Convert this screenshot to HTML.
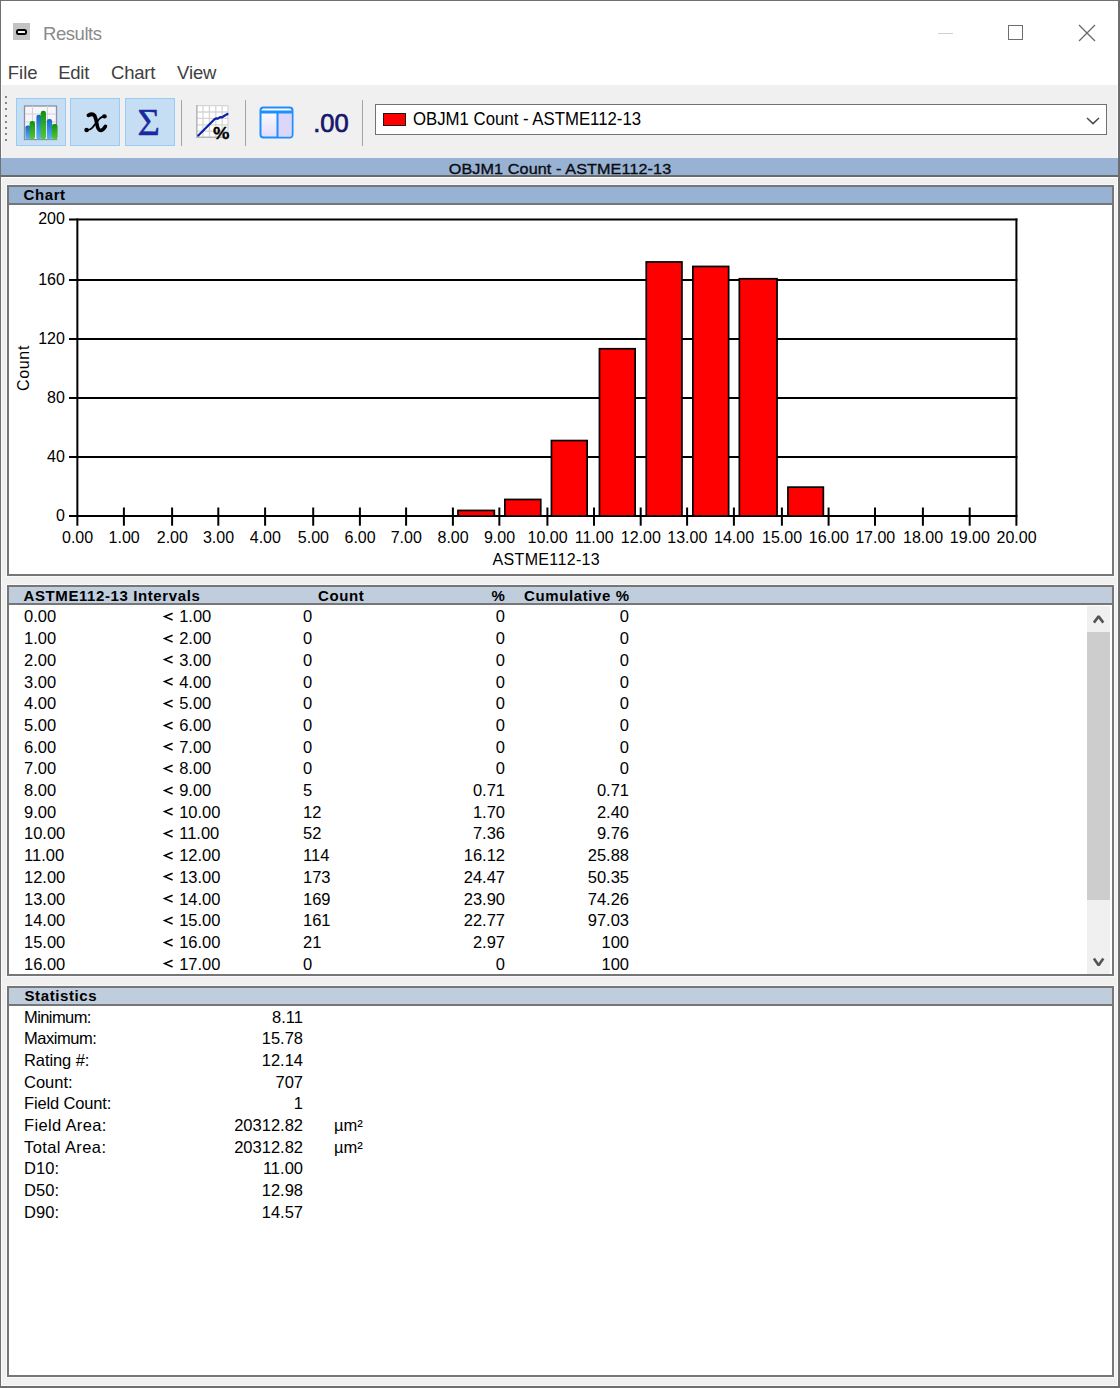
<!DOCTYPE html>
<html><head><meta charset="utf-8"><title>Results</title>
<style>
html,body{margin:0;padding:0;}
body{width:1120px;height:1388px;position:relative;overflow:hidden;background:#f0f0f0;font-family:"Liberation Sans",sans-serif;}
.r{position:absolute;box-sizing:border-box;}
.t{position:absolute;white-space:nowrap;font-family:"Liberation Sans",sans-serif;}
</style></head><body>
<div class="r" style="left:0px;top:0px;width:1120px;height:85px;background:#ffffff;"></div>
<div class="r" style="left:0px;top:85px;width:1120px;height:73px;background:#f0f0f0;"></div>
<div class="r" style="left:0px;top:0px;width:1120px;height:1px;background:#707070;"></div>
<div class="r" style="left:0px;top:0px;width:1px;height:1388px;background:#707070;"></div>
<div class="r" style="left:1118px;top:0px;width:2px;height:1388px;background:#6e6e6e;"></div>
<div class="r" style="left:0px;top:1386px;width:1120px;height:2px;background:#6e6e6e;"></div>
<div class="r" style="left:1px;top:85px;width:1px;height:1301px;background:#fbfbfb;"></div>
<div class="r" style="left:1px;top:1385px;width:1117px;height:1px;background:#fbfbfb;"></div>
<div class="r" style="left:1117px;top:85px;width:1px;height:1301px;background:#fbfbfb;"></div>
<div class="r" style="left:13px;top:23px;width:17px;height:17px;background:#c3c3c3"></div>
<div class="r" style="left:16px;top:29px;width:11px;height:6px;border:2px solid #000;border-radius:2.5px;background:#f6f6f6"></div>
<div class="t" style="left:43.00px;top:24.54px;font-size:18.5px;line-height:18.5px;color:#8a8a8a;letter-spacing:-0.45px;">Results</div>
<div class="r" style="left:938px;top:33px;width:15px;height:1px;background:#cfcfcf;"></div>
<div class="r" style="left:1008px;top:25px;width:15px;height:15.3px;border:1.3px solid #6e6e6e"></div>
<svg class="r" style="left:1076px;top:22px" width="22" height="22" viewBox="0 0 22 22"><path d="M3 3 L19 19 M19 3 L3 19" stroke="#6a6a6a" stroke-width="1.3"/></svg>
<div class="t" style="left:7.80px;top:63.64px;font-size:18.5px;line-height:18.5px;color:#404040;">File</div>
<div class="t" style="left:58.30px;top:63.64px;font-size:18.5px;line-height:18.5px;color:#404040;letter-spacing:-0.3px;">Edit</div>
<div class="t" style="left:111.00px;top:63.64px;font-size:18.5px;line-height:18.5px;color:#404040;letter-spacing:-0.2px;">Chart</div>
<div class="t" style="left:177.00px;top:63.64px;font-size:18.5px;line-height:18.5px;color:#404040;letter-spacing:-0.1px;">View</div>
<div class="r" style="left:4.5px;top:96.0px;width:2px;height:2px;background:#8c8474;"></div>
<div class="r" style="left:4.5px;top:102.2px;width:2px;height:2px;background:#8c8474;"></div>
<div class="r" style="left:4.5px;top:108.4px;width:2px;height:2px;background:#8c8474;"></div>
<div class="r" style="left:4.5px;top:114.6px;width:2px;height:2px;background:#8c8474;"></div>
<div class="r" style="left:4.5px;top:120.8px;width:2px;height:2px;background:#8c8474;"></div>
<div class="r" style="left:4.5px;top:127.0px;width:2px;height:2px;background:#8c8474;"></div>
<div class="r" style="left:4.5px;top:133.2px;width:2px;height:2px;background:#8c8474;"></div>
<div class="r" style="left:4.5px;top:139.4px;width:2px;height:2px;background:#8c8474;"></div>
<div class="r" style="left:16px;top:98px;width:50px;height:48px;background:#c5def4;border:1.3px solid #99cbf7"></div>
<div class="r" style="left:70px;top:98px;width:50px;height:48px;background:#c5def4;border:1.3px solid #99cbf7"></div>
<div class="r" style="left:124.5px;top:98px;width:50px;height:48px;background:#c5def4;border:1.3px solid #99cbf7"></div>
<div class="r" style="left:181px;top:100px;width:1.2px;height:46px;background:#a5a5a5;"></div>
<div class="r" style="left:244.5px;top:100px;width:1.2px;height:46px;background:#a5a5a5;"></div>
<div class="r" style="left:362px;top:100px;width:1.2px;height:46px;background:#a5a5a5;"></div>
<svg class="r" style="left:23px;top:104px" width="36" height="37" viewBox="0 0 36 37">
<defs>
<linearGradient id="gb" x1="0" y1="0" x2="0" y2="1"><stop offset="0" stop-color="#1466c8"/><stop offset="1" stop-color="#5cb4f4"/></linearGradient>
<linearGradient id="gg" x1="0" y1="0" x2="0" y2="1"><stop offset="0" stop-color="#109010"/><stop offset="1" stop-color="#56c83c"/></linearGradient>
</defs>
<rect x="1.5" y="2" width="32" height="33.5" fill="#f6f6fa" stroke="#8e8e9e" stroke-width="1.3"/>
<path d="M2 10 H33 M2 18 H33 M9.5 2 V35 M24.5 2 V35" stroke="#d2d2dc" stroke-width="1"/>
<rect x="2.4" y="21.4" width="5.3" height="14" rx="2.2" fill="url(#gb)"/>
<rect x="13.4" y="10.7" width="4.8" height="24.7" rx="2.2" fill="url(#gb)"/>
<rect x="23.8" y="15" width="5.3" height="20.4" rx="2.2" fill="url(#gb)"/>
<rect x="6.6" y="17" width="5.4" height="18.4" rx="2.4" fill="url(#gg)"/>
<rect x="17.7" y="6.8" width="5.3" height="28.6" rx="2.4" fill="url(#gg)"/>
<rect x="28.8" y="20" width="5.7" height="15.4" rx="2.4" fill="url(#gg)"/>
</svg>
<svg class="r" style="left:80px;top:106px" width="32" height="32" viewBox="0 0 32 32">
<path d="M8.4 9.4 Q12.4 7 14.6 9.6 Q15.9 12.2 16.9 18 Q18 24.6 20.8 24.5 Q23.2 24 25.4 20.4" stroke="#000" stroke-width="3.7" fill="none" stroke-linecap="round"/>
<path d="M24.6 10.2 Q20.8 10.6 17.4 15.4 L12.4 21.6 Q9.6 24.6 6.4 24.2" stroke="#000" stroke-width="1.7" fill="none"/>
<ellipse cx="24.4" cy="10.4" rx="2.4" ry="2.1"/>
<ellipse cx="6.6" cy="24.0" rx="2.3" ry="2.2"/>
</svg>
<div class="t" style="left:137.5px;top:101.8px;width:30px;height:40px;font-family:'Liberation Serif',serif;font-size:38.5px;line-height:40px;color:#1a2a9e;-webkit-text-stroke:0.45px #1a2a9e">&Sigma;</div>
<svg class="r" style="left:196px;top:105px" width="36" height="36" viewBox="0 0 36 36">
<rect x="0" y="0" width="32.5" height="32.5" fill="#ffffff"/>
<path d="M7 0 V32.5 M13.4 0 V32.5 M19.8 0 V32.5 M26.2 0 V32.5 M32 0 V32.5 M0 0.6 H32.5 M0 7 H32.5 M0 13.4 H32.5 M0 19.8 H32.5 M0 26.2 H32.5" stroke="#d6d6d6" stroke-width="1.3"/>
<path d="M0.8 0 V32.2 H32.5" stroke="#b8b8b8" stroke-width="1.6" fill="none"/>
<path d="M2.3 30.6 L18.5 14.2 L20.5 13.3 L22 13.6 L24 12.2 L26 12.4 L28 11 L31.5 9" stroke="#0a24a4" stroke-width="2.2" fill="none" stroke-linecap="round" stroke-linejoin="round"/>
</svg>
<div class="t" style="left:213px;top:124.6px;font-size:16.5px;line-height:17px;font-weight:bold;color:#000;transform:scaleX(1.12);transform-origin:0 0;-webkit-text-stroke:0.3px #000">%</div>
<svg class="r" style="left:259px;top:106px" width="36" height="34" viewBox="0 0 36 34">
<defs><linearGradient id="g1" x1="0" y1="0" x2="0" y2="1"><stop offset="0" stop-color="#ffffff"/><stop offset="1" stop-color="#e2dcfa"/></linearGradient></defs>
<rect x="1.5" y="1.5" width="32" height="30" rx="3" fill="url(#g1)" stroke="#1e8fff" stroke-width="2"/>
<rect x="19" y="7" width="13.5" height="23.5" fill="#dcd6fa"/>
<path d="M1.5 6 H33.5" stroke="#1e8fff" stroke-width="3"/>
<path d="M18.5 6 V31.5" stroke="#1e8fff" stroke-width="2"/>
</svg>
<div class="t" style="left:313.20px;top:110.51px;font-size:25.5px;line-height:25.5px;color:#16166a;-webkit-text-stroke:0.7px #16166a;">.00</div>
<div class="r" style="left:375px;top:104px;width:732px;height:31px;background:#fff;border:1.3px solid #727272"></div>
<div class="r" style="left:382.5px;top:113.3px;width:23px;height:12.5px;background:#ff0000;border:1.3px solid #1a1a1a"></div>
<div class="t" style="left:413.30px;top:109.69px;font-size:18.8px;line-height:18.8px;color:#000;transform:scaleX(0.893);transform-origin:0 0;">OBJM1 Count - ASTME112-13</div>
<svg class="r" style="left:1084px;top:114px" width="18" height="12" viewBox="0 0 18 12"><path d="M3 4 L9 9.6 L15 4" stroke="#4a4a4a" stroke-width="1.5" fill="none"/></svg>
<div class="r" style="left:1px;top:158px;width:1117px;height:17px;background:#98b2d3;"></div>
<div class="r" style="left:1px;top:175px;width:1117px;height:2px;background:#6b6b6b;"></div>
<div class="r" style="left:1px;top:177px;width:1117px;height:1px;background:#ffffff;"></div>
<div class="t" style="left:259.70px;width:600px;text-align:center;top:161.03px;font-size:15.2px;line-height:15.2px;color:#0c0c10;letter-spacing:0.1px;transform:scaleX(1.065);-webkit-text-stroke:0.35px #0c0c10;">OBJM1 Count - ASTME112-13</div>
<div class="r" style="left:7px;top:185px;width:1107px;height:391px;background:#fff;border:2px solid #767676;box-shadow:0 0 0 1px #f9f9f9"></div>
<div class="r" style="left:9px;top:187px;width:1103px;height:16px;background:#98b2d3;"></div>
<div class="r" style="left:9px;top:203px;width:1103px;height:2px;background:#767676;"></div>
<div class="r" style="left:7px;top:585px;width:1107px;height:391px;background:#fff;border:2px solid #767676;box-shadow:0 0 0 1px #f9f9f9"></div>
<div class="r" style="left:9px;top:587px;width:1103px;height:16px;background:#bfcddc;"></div>
<div class="r" style="left:9px;top:603px;width:1103px;height:2px;background:#767676;"></div>
<div class="r" style="left:7px;top:986px;width:1107px;height:391px;background:#fff;border:2px solid #767676;box-shadow:0 0 0 1px #f9f9f9"></div>
<div class="r" style="left:9px;top:988px;width:1103px;height:16px;background:#bfcddc;"></div>
<div class="r" style="left:9px;top:1004px;width:1103px;height:2px;background:#767676;"></div>
<div class="t" style="left:23.50px;top:187.30px;font-size:15px;line-height:15px;font-weight:bold;color:#000;letter-spacing:0.6px;">Chart</div>
<div class="t" style="left:23.50px;top:588.00px;font-size:15px;line-height:15px;font-weight:bold;color:#000;letter-spacing:0.6px;">ASTME112-13 Intervals</div>
<div class="t" style="left:318.00px;top:588.00px;font-size:15px;line-height:15px;font-weight:bold;color:#000;letter-spacing:0.6px;">Count</div>
<div class="t" style="right:614.70px;text-align:right;top:588.00px;font-size:15px;line-height:15px;font-weight:bold;color:#000;letter-spacing:0.6px;">%</div>
<div class="t" style="right:490.40px;text-align:right;top:588.00px;font-size:15px;line-height:15px;font-weight:bold;color:#000;letter-spacing:0.6px;">Cumulative %</div>
<div class="t" style="left:24.50px;top:987.90px;font-size:15px;line-height:15px;font-weight:bold;color:#000;letter-spacing:0.6px;">Statistics</div>
<svg class="r" style="left:0;top:0" width="1120" height="600" viewBox="0 0 1120 600">
<path d="M69 516.07 H1017.40" stroke="#000" stroke-width="2"/>
<path d="M69 457.07 H1017.40" stroke="#000" stroke-width="2"/>
<path d="M69 398.04 H1017.40" stroke="#000" stroke-width="2"/>
<path d="M69 339.00 H1017.40" stroke="#000" stroke-width="2"/>
<path d="M69 280.07 H1017.40" stroke="#000" stroke-width="2"/>
<path d="M69 219.60 H1017.40" stroke="#000" stroke-width="2"/>
<path d="M77.36 218.60 V525.7" stroke="#000" stroke-width="2"/>
<path d="M1016.40 218.60 V525.7" stroke="#000" stroke-width="2"/>
<path d="M123.90 507.5 V525.7" stroke="#000" stroke-width="2"/>
<path d="M172.10 507.5 V525.7" stroke="#000" stroke-width="2"/>
<path d="M218.30 507.5 V525.7" stroke="#000" stroke-width="2"/>
<path d="M265.10 507.5 V525.7" stroke="#000" stroke-width="2"/>
<path d="M313.20 507.5 V525.7" stroke="#000" stroke-width="2"/>
<path d="M359.90 507.5 V525.7" stroke="#000" stroke-width="2"/>
<path d="M406.10 507.5 V525.7" stroke="#000" stroke-width="2"/>
<path d="M452.90 507.5 V525.7" stroke="#000" stroke-width="2"/>
<path d="M499.35 507.5 V525.7" stroke="#000" stroke-width="2"/>
<path d="M547.40 507.5 V525.7" stroke="#000" stroke-width="2"/>
<path d="M594.00 507.5 V525.7" stroke="#000" stroke-width="2"/>
<path d="M640.70 507.5 V525.7" stroke="#000" stroke-width="2"/>
<path d="M687.10 507.5 V525.7" stroke="#000" stroke-width="2"/>
<path d="M733.90 507.5 V525.7" stroke="#000" stroke-width="2"/>
<path d="M781.90 507.5 V525.7" stroke="#000" stroke-width="2"/>
<path d="M828.60 507.5 V525.7" stroke="#000" stroke-width="2"/>
<path d="M875.00 507.5 V525.7" stroke="#000" stroke-width="2"/>
<path d="M922.90 507.5 V525.7" stroke="#000" stroke-width="2"/>
<path d="M969.70 507.5 V525.7" stroke="#000" stroke-width="2"/>
<rect x="457.95" y="510.45" width="36.40" height="5.62" fill="#ff0000" stroke="#000" stroke-width="1.7"/>
<rect x="504.85" y="499.45" width="35.90" height="16.62" fill="#ff0000" stroke="#000" stroke-width="1.7"/>
<rect x="551.45" y="440.55" width="35.70" height="75.52" fill="#ff0000" stroke="#000" stroke-width="1.7"/>
<rect x="599.45" y="348.75" width="35.70" height="167.32" fill="#ff0000" stroke="#000" stroke-width="1.7"/>
<rect x="646.25" y="261.95" width="35.70" height="254.12" fill="#ff0000" stroke="#000" stroke-width="1.7"/>
<rect x="692.85" y="266.45" width="35.80" height="249.62" fill="#ff0000" stroke="#000" stroke-width="1.7"/>
<rect x="739.35" y="278.75" width="37.70" height="237.32" fill="#ff0000" stroke="#000" stroke-width="1.7"/>
<rect x="787.95" y="487.15" width="35.40" height="28.92" fill="#ff0000" stroke="#000" stroke-width="1.7"/>
</svg>
<div class="t" style="right:1055.10px;text-align:right;top:507.93px;font-size:16px;line-height:16px;color:#000;">0</div>
<div class="t" style="right:1055.10px;text-align:right;top:448.93px;font-size:16px;line-height:16px;color:#000;">40</div>
<div class="t" style="right:1055.10px;text-align:right;top:389.90px;font-size:16px;line-height:16px;color:#000;">80</div>
<div class="t" style="right:1055.10px;text-align:right;top:330.86px;font-size:16px;line-height:16px;color:#000;">120</div>
<div class="t" style="right:1055.10px;text-align:right;top:271.93px;font-size:16px;line-height:16px;color:#000;">160</div>
<div class="t" style="right:1055.10px;text-align:right;top:211.46px;font-size:16px;line-height:16px;color:#000;">200</div>
<div class="t" style="left:-222.44px;width:600px;text-align:center;top:530.26px;font-size:16px;line-height:16px;color:#000;">0.00</div>
<div class="t" style="left:-175.90px;width:600px;text-align:center;top:530.26px;font-size:16px;line-height:16px;color:#000;">1.00</div>
<div class="t" style="left:-127.70px;width:600px;text-align:center;top:530.26px;font-size:16px;line-height:16px;color:#000;">2.00</div>
<div class="t" style="left:-81.50px;width:600px;text-align:center;top:530.26px;font-size:16px;line-height:16px;color:#000;">3.00</div>
<div class="t" style="left:-34.70px;width:600px;text-align:center;top:530.26px;font-size:16px;line-height:16px;color:#000;">4.00</div>
<div class="t" style="left:13.40px;width:600px;text-align:center;top:530.26px;font-size:16px;line-height:16px;color:#000;">5.00</div>
<div class="t" style="left:60.10px;width:600px;text-align:center;top:530.26px;font-size:16px;line-height:16px;color:#000;">6.00</div>
<div class="t" style="left:106.30px;width:600px;text-align:center;top:530.26px;font-size:16px;line-height:16px;color:#000;">7.00</div>
<div class="t" style="left:153.10px;width:600px;text-align:center;top:530.26px;font-size:16px;line-height:16px;color:#000;">8.00</div>
<div class="t" style="left:199.55px;width:600px;text-align:center;top:530.26px;font-size:16px;line-height:16px;color:#000;">9.00</div>
<div class="t" style="left:247.60px;width:600px;text-align:center;top:530.26px;font-size:16px;line-height:16px;color:#000;">10.00</div>
<div class="t" style="left:294.20px;width:600px;text-align:center;top:530.26px;font-size:16px;line-height:16px;color:#000;">11.00</div>
<div class="t" style="left:340.90px;width:600px;text-align:center;top:530.26px;font-size:16px;line-height:16px;color:#000;">12.00</div>
<div class="t" style="left:387.30px;width:600px;text-align:center;top:530.26px;font-size:16px;line-height:16px;color:#000;">13.00</div>
<div class="t" style="left:434.10px;width:600px;text-align:center;top:530.26px;font-size:16px;line-height:16px;color:#000;">14.00</div>
<div class="t" style="left:482.10px;width:600px;text-align:center;top:530.26px;font-size:16px;line-height:16px;color:#000;">15.00</div>
<div class="t" style="left:528.80px;width:600px;text-align:center;top:530.26px;font-size:16px;line-height:16px;color:#000;">16.00</div>
<div class="t" style="left:575.20px;width:600px;text-align:center;top:530.26px;font-size:16px;line-height:16px;color:#000;">17.00</div>
<div class="t" style="left:623.10px;width:600px;text-align:center;top:530.26px;font-size:16px;line-height:16px;color:#000;">18.00</div>
<div class="t" style="left:669.90px;width:600px;text-align:center;top:530.26px;font-size:16px;line-height:16px;color:#000;">19.00</div>
<div class="t" style="left:716.60px;width:600px;text-align:center;top:530.26px;font-size:16px;line-height:16px;color:#000;">20.00</div>
<div class="t" style="left:246.30px;width:600px;text-align:center;top:551.56px;font-size:16px;line-height:16px;color:#000;letter-spacing:0.35px;">ASTME112-13</div>
<div class="t" style="left:-7.8px;top:358.8px;width:64px;height:18px;font-size:16px;line-height:18px;text-align:center;letter-spacing:0.7px;transform:rotate(-90deg)">Count</div>
<div class="t" style="left:24.00px;top:608.43px;font-size:16.5px;line-height:16.5px;color:#000;">0.00</div>
<svg class="r" style="left:160px;top:610.00px" width="16" height="14" viewBox="0 0 16 14"><path d="M12.6 3.2 L4.6 6.6 L12.6 10" stroke="#000" stroke-width="1.5" fill="none" stroke-linejoin="miter"/></svg>
<div class="t" style="left:179.20px;top:608.43px;font-size:16.5px;line-height:16.5px;color:#000;">1.00</div>
<div class="t" style="left:303.00px;top:608.43px;font-size:16.5px;line-height:16.5px;color:#000;">0</div>
<div class="t" style="right:615.00px;text-align:right;top:608.43px;font-size:16.5px;line-height:16.5px;color:#000;">0</div>
<div class="t" style="right:491.00px;text-align:right;top:608.43px;font-size:16.5px;line-height:16.5px;color:#000;">0</div>
<div class="t" style="left:24.00px;top:630.13px;font-size:16.5px;line-height:16.5px;color:#000;">1.00</div>
<svg class="r" style="left:160px;top:631.70px" width="16" height="14" viewBox="0 0 16 14"><path d="M12.6 3.2 L4.6 6.6 L12.6 10" stroke="#000" stroke-width="1.5" fill="none" stroke-linejoin="miter"/></svg>
<div class="t" style="left:179.20px;top:630.13px;font-size:16.5px;line-height:16.5px;color:#000;">2.00</div>
<div class="t" style="left:303.00px;top:630.13px;font-size:16.5px;line-height:16.5px;color:#000;">0</div>
<div class="t" style="right:615.00px;text-align:right;top:630.13px;font-size:16.5px;line-height:16.5px;color:#000;">0</div>
<div class="t" style="right:491.00px;text-align:right;top:630.13px;font-size:16.5px;line-height:16.5px;color:#000;">0</div>
<div class="t" style="left:24.00px;top:651.83px;font-size:16.5px;line-height:16.5px;color:#000;">2.00</div>
<svg class="r" style="left:160px;top:653.40px" width="16" height="14" viewBox="0 0 16 14"><path d="M12.6 3.2 L4.6 6.6 L12.6 10" stroke="#000" stroke-width="1.5" fill="none" stroke-linejoin="miter"/></svg>
<div class="t" style="left:179.20px;top:651.83px;font-size:16.5px;line-height:16.5px;color:#000;">3.00</div>
<div class="t" style="left:303.00px;top:651.83px;font-size:16.5px;line-height:16.5px;color:#000;">0</div>
<div class="t" style="right:615.00px;text-align:right;top:651.83px;font-size:16.5px;line-height:16.5px;color:#000;">0</div>
<div class="t" style="right:491.00px;text-align:right;top:651.83px;font-size:16.5px;line-height:16.5px;color:#000;">0</div>
<div class="t" style="left:24.00px;top:673.53px;font-size:16.5px;line-height:16.5px;color:#000;">3.00</div>
<svg class="r" style="left:160px;top:675.10px" width="16" height="14" viewBox="0 0 16 14"><path d="M12.6 3.2 L4.6 6.6 L12.6 10" stroke="#000" stroke-width="1.5" fill="none" stroke-linejoin="miter"/></svg>
<div class="t" style="left:179.20px;top:673.53px;font-size:16.5px;line-height:16.5px;color:#000;">4.00</div>
<div class="t" style="left:303.00px;top:673.53px;font-size:16.5px;line-height:16.5px;color:#000;">0</div>
<div class="t" style="right:615.00px;text-align:right;top:673.53px;font-size:16.5px;line-height:16.5px;color:#000;">0</div>
<div class="t" style="right:491.00px;text-align:right;top:673.53px;font-size:16.5px;line-height:16.5px;color:#000;">0</div>
<div class="t" style="left:24.00px;top:695.23px;font-size:16.5px;line-height:16.5px;color:#000;">4.00</div>
<svg class="r" style="left:160px;top:696.80px" width="16" height="14" viewBox="0 0 16 14"><path d="M12.6 3.2 L4.6 6.6 L12.6 10" stroke="#000" stroke-width="1.5" fill="none" stroke-linejoin="miter"/></svg>
<div class="t" style="left:179.20px;top:695.23px;font-size:16.5px;line-height:16.5px;color:#000;">5.00</div>
<div class="t" style="left:303.00px;top:695.23px;font-size:16.5px;line-height:16.5px;color:#000;">0</div>
<div class="t" style="right:615.00px;text-align:right;top:695.23px;font-size:16.5px;line-height:16.5px;color:#000;">0</div>
<div class="t" style="right:491.00px;text-align:right;top:695.23px;font-size:16.5px;line-height:16.5px;color:#000;">0</div>
<div class="t" style="left:24.00px;top:716.93px;font-size:16.5px;line-height:16.5px;color:#000;">5.00</div>
<svg class="r" style="left:160px;top:718.50px" width="16" height="14" viewBox="0 0 16 14"><path d="M12.6 3.2 L4.6 6.6 L12.6 10" stroke="#000" stroke-width="1.5" fill="none" stroke-linejoin="miter"/></svg>
<div class="t" style="left:179.20px;top:716.93px;font-size:16.5px;line-height:16.5px;color:#000;">6.00</div>
<div class="t" style="left:303.00px;top:716.93px;font-size:16.5px;line-height:16.5px;color:#000;">0</div>
<div class="t" style="right:615.00px;text-align:right;top:716.93px;font-size:16.5px;line-height:16.5px;color:#000;">0</div>
<div class="t" style="right:491.00px;text-align:right;top:716.93px;font-size:16.5px;line-height:16.5px;color:#000;">0</div>
<div class="t" style="left:24.00px;top:738.63px;font-size:16.5px;line-height:16.5px;color:#000;">6.00</div>
<svg class="r" style="left:160px;top:740.20px" width="16" height="14" viewBox="0 0 16 14"><path d="M12.6 3.2 L4.6 6.6 L12.6 10" stroke="#000" stroke-width="1.5" fill="none" stroke-linejoin="miter"/></svg>
<div class="t" style="left:179.20px;top:738.63px;font-size:16.5px;line-height:16.5px;color:#000;">7.00</div>
<div class="t" style="left:303.00px;top:738.63px;font-size:16.5px;line-height:16.5px;color:#000;">0</div>
<div class="t" style="right:615.00px;text-align:right;top:738.63px;font-size:16.5px;line-height:16.5px;color:#000;">0</div>
<div class="t" style="right:491.00px;text-align:right;top:738.63px;font-size:16.5px;line-height:16.5px;color:#000;">0</div>
<div class="t" style="left:24.00px;top:760.33px;font-size:16.5px;line-height:16.5px;color:#000;">7.00</div>
<svg class="r" style="left:160px;top:761.90px" width="16" height="14" viewBox="0 0 16 14"><path d="M12.6 3.2 L4.6 6.6 L12.6 10" stroke="#000" stroke-width="1.5" fill="none" stroke-linejoin="miter"/></svg>
<div class="t" style="left:179.20px;top:760.33px;font-size:16.5px;line-height:16.5px;color:#000;">8.00</div>
<div class="t" style="left:303.00px;top:760.33px;font-size:16.5px;line-height:16.5px;color:#000;">0</div>
<div class="t" style="right:615.00px;text-align:right;top:760.33px;font-size:16.5px;line-height:16.5px;color:#000;">0</div>
<div class="t" style="right:491.00px;text-align:right;top:760.33px;font-size:16.5px;line-height:16.5px;color:#000;">0</div>
<div class="t" style="left:24.00px;top:782.03px;font-size:16.5px;line-height:16.5px;color:#000;">8.00</div>
<svg class="r" style="left:160px;top:783.60px" width="16" height="14" viewBox="0 0 16 14"><path d="M12.6 3.2 L4.6 6.6 L12.6 10" stroke="#000" stroke-width="1.5" fill="none" stroke-linejoin="miter"/></svg>
<div class="t" style="left:179.20px;top:782.03px;font-size:16.5px;line-height:16.5px;color:#000;">9.00</div>
<div class="t" style="left:303.00px;top:782.03px;font-size:16.5px;line-height:16.5px;color:#000;">5</div>
<div class="t" style="right:615.00px;text-align:right;top:782.03px;font-size:16.5px;line-height:16.5px;color:#000;">0.71</div>
<div class="t" style="right:491.00px;text-align:right;top:782.03px;font-size:16.5px;line-height:16.5px;color:#000;">0.71</div>
<div class="t" style="left:24.00px;top:803.73px;font-size:16.5px;line-height:16.5px;color:#000;">9.00</div>
<svg class="r" style="left:160px;top:805.30px" width="16" height="14" viewBox="0 0 16 14"><path d="M12.6 3.2 L4.6 6.6 L12.6 10" stroke="#000" stroke-width="1.5" fill="none" stroke-linejoin="miter"/></svg>
<div class="t" style="left:179.20px;top:803.73px;font-size:16.5px;line-height:16.5px;color:#000;">10.00</div>
<div class="t" style="left:303.00px;top:803.73px;font-size:16.5px;line-height:16.5px;color:#000;">12</div>
<div class="t" style="right:615.00px;text-align:right;top:803.73px;font-size:16.5px;line-height:16.5px;color:#000;">1.70</div>
<div class="t" style="right:491.00px;text-align:right;top:803.73px;font-size:16.5px;line-height:16.5px;color:#000;">2.40</div>
<div class="t" style="left:24.00px;top:825.43px;font-size:16.5px;line-height:16.5px;color:#000;">10.00</div>
<svg class="r" style="left:160px;top:827.00px" width="16" height="14" viewBox="0 0 16 14"><path d="M12.6 3.2 L4.6 6.6 L12.6 10" stroke="#000" stroke-width="1.5" fill="none" stroke-linejoin="miter"/></svg>
<div class="t" style="left:179.20px;top:825.43px;font-size:16.5px;line-height:16.5px;color:#000;">11.00</div>
<div class="t" style="left:303.00px;top:825.43px;font-size:16.5px;line-height:16.5px;color:#000;">52</div>
<div class="t" style="right:615.00px;text-align:right;top:825.43px;font-size:16.5px;line-height:16.5px;color:#000;">7.36</div>
<div class="t" style="right:491.00px;text-align:right;top:825.43px;font-size:16.5px;line-height:16.5px;color:#000;">9.76</div>
<div class="t" style="left:24.00px;top:847.13px;font-size:16.5px;line-height:16.5px;color:#000;">11.00</div>
<svg class="r" style="left:160px;top:848.70px" width="16" height="14" viewBox="0 0 16 14"><path d="M12.6 3.2 L4.6 6.6 L12.6 10" stroke="#000" stroke-width="1.5" fill="none" stroke-linejoin="miter"/></svg>
<div class="t" style="left:179.20px;top:847.13px;font-size:16.5px;line-height:16.5px;color:#000;">12.00</div>
<div class="t" style="left:303.00px;top:847.13px;font-size:16.5px;line-height:16.5px;color:#000;">114</div>
<div class="t" style="right:615.00px;text-align:right;top:847.13px;font-size:16.5px;line-height:16.5px;color:#000;">16.12</div>
<div class="t" style="right:491.00px;text-align:right;top:847.13px;font-size:16.5px;line-height:16.5px;color:#000;">25.88</div>
<div class="t" style="left:24.00px;top:868.83px;font-size:16.5px;line-height:16.5px;color:#000;">12.00</div>
<svg class="r" style="left:160px;top:870.40px" width="16" height="14" viewBox="0 0 16 14"><path d="M12.6 3.2 L4.6 6.6 L12.6 10" stroke="#000" stroke-width="1.5" fill="none" stroke-linejoin="miter"/></svg>
<div class="t" style="left:179.20px;top:868.83px;font-size:16.5px;line-height:16.5px;color:#000;">13.00</div>
<div class="t" style="left:303.00px;top:868.83px;font-size:16.5px;line-height:16.5px;color:#000;">173</div>
<div class="t" style="right:615.00px;text-align:right;top:868.83px;font-size:16.5px;line-height:16.5px;color:#000;">24.47</div>
<div class="t" style="right:491.00px;text-align:right;top:868.83px;font-size:16.5px;line-height:16.5px;color:#000;">50.35</div>
<div class="t" style="left:24.00px;top:890.53px;font-size:16.5px;line-height:16.5px;color:#000;">13.00</div>
<svg class="r" style="left:160px;top:892.10px" width="16" height="14" viewBox="0 0 16 14"><path d="M12.6 3.2 L4.6 6.6 L12.6 10" stroke="#000" stroke-width="1.5" fill="none" stroke-linejoin="miter"/></svg>
<div class="t" style="left:179.20px;top:890.53px;font-size:16.5px;line-height:16.5px;color:#000;">14.00</div>
<div class="t" style="left:303.00px;top:890.53px;font-size:16.5px;line-height:16.5px;color:#000;">169</div>
<div class="t" style="right:615.00px;text-align:right;top:890.53px;font-size:16.5px;line-height:16.5px;color:#000;">23.90</div>
<div class="t" style="right:491.00px;text-align:right;top:890.53px;font-size:16.5px;line-height:16.5px;color:#000;">74.26</div>
<div class="t" style="left:24.00px;top:912.23px;font-size:16.5px;line-height:16.5px;color:#000;">14.00</div>
<svg class="r" style="left:160px;top:913.80px" width="16" height="14" viewBox="0 0 16 14"><path d="M12.6 3.2 L4.6 6.6 L12.6 10" stroke="#000" stroke-width="1.5" fill="none" stroke-linejoin="miter"/></svg>
<div class="t" style="left:179.20px;top:912.23px;font-size:16.5px;line-height:16.5px;color:#000;">15.00</div>
<div class="t" style="left:303.00px;top:912.23px;font-size:16.5px;line-height:16.5px;color:#000;">161</div>
<div class="t" style="right:615.00px;text-align:right;top:912.23px;font-size:16.5px;line-height:16.5px;color:#000;">22.77</div>
<div class="t" style="right:491.00px;text-align:right;top:912.23px;font-size:16.5px;line-height:16.5px;color:#000;">97.03</div>
<div class="t" style="left:24.00px;top:933.93px;font-size:16.5px;line-height:16.5px;color:#000;">15.00</div>
<svg class="r" style="left:160px;top:935.50px" width="16" height="14" viewBox="0 0 16 14"><path d="M12.6 3.2 L4.6 6.6 L12.6 10" stroke="#000" stroke-width="1.5" fill="none" stroke-linejoin="miter"/></svg>
<div class="t" style="left:179.20px;top:933.93px;font-size:16.5px;line-height:16.5px;color:#000;">16.00</div>
<div class="t" style="left:303.00px;top:933.93px;font-size:16.5px;line-height:16.5px;color:#000;">21</div>
<div class="t" style="right:615.00px;text-align:right;top:933.93px;font-size:16.5px;line-height:16.5px;color:#000;">2.97</div>
<div class="t" style="right:491.00px;text-align:right;top:933.93px;font-size:16.5px;line-height:16.5px;color:#000;">100</div>
<div class="t" style="left:24.00px;top:955.63px;font-size:16.5px;line-height:16.5px;color:#000;">16.00</div>
<svg class="r" style="left:160px;top:957.20px" width="16" height="14" viewBox="0 0 16 14"><path d="M12.6 3.2 L4.6 6.6 L12.6 10" stroke="#000" stroke-width="1.5" fill="none" stroke-linejoin="miter"/></svg>
<div class="t" style="left:179.20px;top:955.63px;font-size:16.5px;line-height:16.5px;color:#000;">17.00</div>
<div class="t" style="left:303.00px;top:955.63px;font-size:16.5px;line-height:16.5px;color:#000;">0</div>
<div class="t" style="right:615.00px;text-align:right;top:955.63px;font-size:16.5px;line-height:16.5px;color:#000;">0</div>
<div class="t" style="right:491.00px;text-align:right;top:955.63px;font-size:16.5px;line-height:16.5px;color:#000;">100</div>
<div class="r" style="left:1087px;top:606px;width:22.7px;height:368px;background:#f0f0f0;"></div>
<div class="r" style="left:1087px;top:631.5px;width:22.7px;height:268.5px;background:#cdcdcd;"></div>
<svg class="r" style="left:1087px;top:606px" width="25" height="368" viewBox="0 0 25 368"><path d="M6.9 16.6 L11.6 10.4 L16.3 16.6" stroke="#555" stroke-width="2.6" fill="none" stroke-linejoin="bevel"/><path d="M6.9 352.4 L11.6 359.2 L16.3 352.4" stroke="#555" stroke-width="2.6" fill="none" stroke-linejoin="bevel"/></svg>
<div class="t" style="left:24.00px;top:1008.53px;font-size:16.5px;line-height:16.5px;color:#000;letter-spacing:-0.59px;">Minimum:</div>
<div class="t" style="right:817.00px;text-align:right;top:1008.53px;font-size:16.5px;line-height:16.5px;color:#000;">8.11</div>
<div class="t" style="left:24.00px;top:1030.20px;font-size:16.5px;line-height:16.5px;color:#000;letter-spacing:-0.46px;">Maximum:</div>
<div class="t" style="right:817.00px;text-align:right;top:1030.20px;font-size:16.5px;line-height:16.5px;color:#000;">15.78</div>
<div class="t" style="left:24.00px;top:1051.87px;font-size:16.5px;line-height:16.5px;color:#000;letter-spacing:-0.09px;">Rating #:</div>
<div class="t" style="right:817.00px;text-align:right;top:1051.87px;font-size:16.5px;line-height:16.5px;color:#000;">12.14</div>
<div class="t" style="left:24.00px;top:1073.54px;font-size:16.5px;line-height:16.5px;color:#000;letter-spacing:0px;">Count:</div>
<div class="t" style="right:817.00px;text-align:right;top:1073.54px;font-size:16.5px;line-height:16.5px;color:#000;">707</div>
<div class="t" style="left:24.00px;top:1095.21px;font-size:16.5px;line-height:16.5px;color:#000;letter-spacing:-0.15px;">Field Count:</div>
<div class="t" style="right:817.00px;text-align:right;top:1095.21px;font-size:16.5px;line-height:16.5px;color:#000;">1</div>
<div class="t" style="left:24.00px;top:1116.88px;font-size:16.5px;line-height:16.5px;color:#000;letter-spacing:0.34px;">Field Area:</div>
<div class="t" style="right:817.00px;text-align:right;top:1116.88px;font-size:16.5px;line-height:16.5px;color:#000;">20312.82</div>
<div class="t" style="left:334.00px;top:1116.88px;font-size:16.5px;line-height:16.5px;color:#000;">&micro;m&sup2;</div>
<div class="t" style="left:24.00px;top:1138.55px;font-size:16.5px;line-height:16.5px;color:#000;letter-spacing:0.4px;">Total Area:</div>
<div class="t" style="right:817.00px;text-align:right;top:1138.55px;font-size:16.5px;line-height:16.5px;color:#000;">20312.82</div>
<div class="t" style="left:334.00px;top:1138.55px;font-size:16.5px;line-height:16.5px;color:#000;">&micro;m&sup2;</div>
<div class="t" style="left:24.00px;top:1160.22px;font-size:16.5px;line-height:16.5px;color:#000;letter-spacing:0.05px;">D10:</div>
<div class="t" style="right:817.00px;text-align:right;top:1160.22px;font-size:16.5px;line-height:16.5px;color:#000;">11.00</div>
<div class="t" style="left:24.00px;top:1181.89px;font-size:16.5px;line-height:16.5px;color:#000;letter-spacing:0.05px;">D50:</div>
<div class="t" style="right:817.00px;text-align:right;top:1181.89px;font-size:16.5px;line-height:16.5px;color:#000;">12.98</div>
<div class="t" style="left:24.00px;top:1203.56px;font-size:16.5px;line-height:16.5px;color:#000;letter-spacing:0.05px;">D90:</div>
<div class="t" style="right:817.00px;text-align:right;top:1203.56px;font-size:16.5px;line-height:16.5px;color:#000;">14.57</div>
</body></html>
